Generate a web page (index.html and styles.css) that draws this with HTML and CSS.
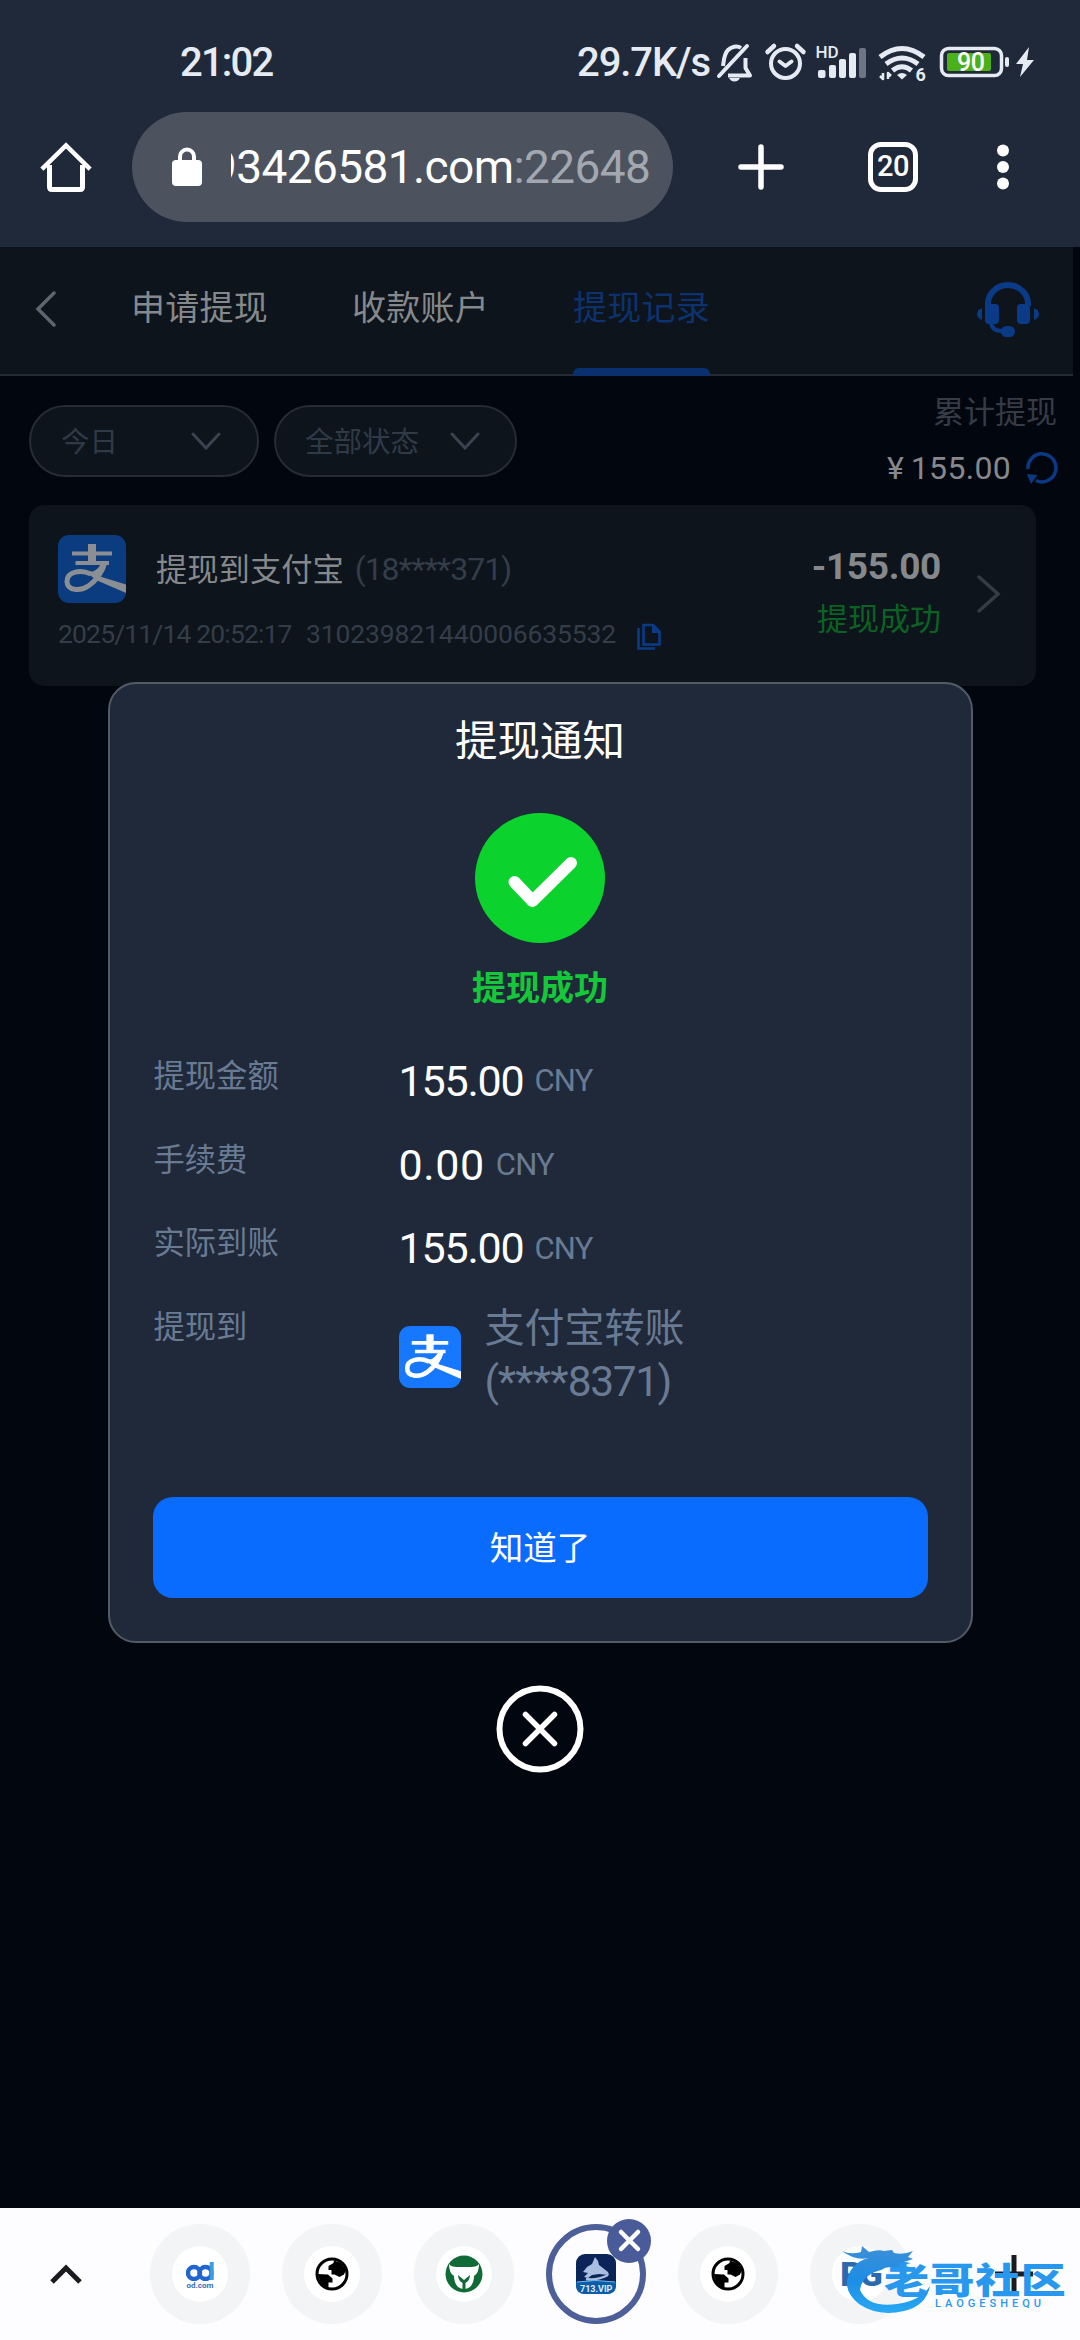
FILE: index.html
```html
<!DOCTYPE html>
<html lang="zh-CN">
<head>
<meta charset="utf-8">
<title>提现记录</title>
<link rel="stylesheet" href="styles.css">
</head>
<body>
<svg width="0" height="0" class="defs" aria-hidden="true">
  <symbol id="alipay" viewBox="0 0 68 68">
    <g fill="none" stroke="currentColor">
      <path d="M34 9V27" stroke-width="8"/>
      <path d="M14 18.500H54" stroke-width="4"/>
      <path d="M17.500 28H51" stroke-width="4"/>
      <path d="M47 27C45 36 38 46 31 50.500C22 57 9 55.500 9 46.500C9 36 23 34.500 33 39" stroke-width="5"/>
    </g>
    <path d="M49.500 26.500C47.500 33 45 38 42 41.500L68 49.500V58L38 45L27 36C34 38 39 37 44 26.500Z" fill="currentColor"/>
  </symbol>
  <symbol id="globe" viewBox="0 0 34 34">
    <circle cx="17" cy="17" r="15" fill="#fff" stroke="#000" stroke-width="3"/>
    <path d="M19 3.500L18.500 6L13.500 9V13H16.500V17.500H19.500L24.500 20L29 17.500L31 13L26 6Z" fill="#000"/>
    <path d="M2.500 17L13 17.500L17.500 21.500V25.500H13.500V31L6 27Z" fill="#000"/>
  </symbol>
  <symbol id="down" viewBox="0 0 30 18">
    <path d="M2 2L15 16L28 2" fill="none" stroke="currentColor" stroke-width="3" stroke-linecap="round"/>
  </symbol>
</svg>
<div class="phone">
  <header class="chrome">
    <div class="status">
      <span class="clock">21:02</span>
      <span class="speed">29.7K/s</span>
      <svg class="sysicons" viewBox="712 38 326 48" width="326" height="48">
        <g fill="none" stroke="#e6ebf3" stroke-width="4" stroke-linejoin="round">
          <path d="M719 76L747 46" stroke-linecap="round"/>
          <path d="M723 66C724 60 724 54 728 50C731 47 737 45 741 48"/>
          <path d="M728 75.500H750L745.500 68V58"/>
          <circle cx="785.500" cy="63.500" r="14.500"/>
          <path d="M779.500 61.500L785.500 66L791.500 61.500" stroke-linecap="round"/>
          <path d="M767.500 52L774 46M803.500 52L797 46" stroke-width="4.500" stroke-linecap="round"/>
          <path d="M880 57Q902 40 924 57" stroke-width="5"/>
          <path d="M886 64Q902 52 918 64" stroke-width="5"/>
          <path d="M892.500 70.500Q902 63 911.500 70.500" stroke-width="5"/>
          <path d="M883 73V79L880 76M888 79V73L891 76" stroke-width="2.500"/>
          <rect x="941.500" y="48.500" width="60" height="27" rx="7" stroke-width="3.500"/>
        </g>
        <g fill="#e6ebf3">
          <path d="M729 78H740Q738 81.500 734.500 81.500Q731 81.500 729 78Z"/>
          <path d="M897 75Q902 71 907 75L902 79.500Z"/>
          <rect x="818" y="70" width="7.500" height="8" rx="2"/>
          <rect x="829" y="65" width="7" height="13" rx="2"/>
          <rect x="839" y="59" width="7" height="19" rx="2"/>
          <rect x="849" y="53" width="7" height="25" rx="2"/>
          <rect x="859" y="48" width="7" height="30" rx="2" opacity=".4"/>
          <rect x="1005" y="57" width="4" height="10" rx="2"/>
          <path d="M1029 47L1016 64H1023L1020 77L1034 60H1027Z"/>
        </g>
        <rect x="947" y="53" width="44" height="18" rx="2" fill="#4cb018"/>
        <text x="815.500" y="58" class="t-hd">HD</text>
        <text x="915.500" y="80.500" class="t-six">6</text>
        <text x="957" y="71" class="t-bat">90</text>
      </svg>
    </div>
    <div class="toolbar">
      <svg class="home" viewBox="0 0 52 52" width="52" height="52" fill="none" stroke="#fff" stroke-width="5" stroke-linejoin="round"><path d="M3.500 26.500L26 4.500L48.500 26.500" stroke-linecap="square" stroke-linejoin="miter" stroke-width="4.500"/><path d="M9.500 24V46Q9.500 48.500 12 48.500H40Q42.500 48.500 42.500 46V24"/></svg>
      <div class="url">
        <svg viewBox="0 0 30 40" width="30" height="40"><rect y="13" width="30" height="26" rx="4" fill="#fff"/><path d="M8 14V9.500A7 7 0 0 1 22 9.500V14" fill="none" stroke="#fff" stroke-width="4"/></svg>
        <div class="url-clip"><span class="url-text">93426581.com<span class="port">:22648</span></span></div>
      </div>
      <svg class="newtab" viewBox="0 0 46 46" width="46" height="46"><path d="M23 3V43M3 23H43" stroke="#fff" stroke-width="5.500" stroke-linecap="round"/></svg>
      <div class="tabcount">20</div>
      <svg class="dots" viewBox="0 0 12 46" width="12" height="46" fill="#fff"><circle cx="6" cy="6.500" r="6"/><circle cx="6" cy="23" r="6"/><circle cx="6" cy="39.500" r="6"/></svg>
    </div>
  </header>

  <main class="page">
    <nav class="nav">
      <svg class="back" viewBox="0 0 22 36" width="22" height="36"><path d="M19 2L3 18L19 34" fill="none" stroke="#5d6570" stroke-width="3.500" stroke-linecap="round"/></svg>
      <span class="tab">申请提现</span>
      <span class="tab">收款账户</span>
      <span class="tab active">提现记录</span>
      <svg class="service" viewBox="0 0 62 56" width="62" height="56" fill="#0b3b87"><path d="M11 24V22A20 19 0 0 1 51 22V24" fill="none" stroke="#0b3b87" stroke-width="6"/><rect x="8" y="22" width="14" height="20" rx="4"/><rect x="40" y="22" width="13" height="20" rx="4"/><path d="M5 26V38Q0 36 0 32T5 26ZM57 26V38Q62 36 62 32T57 26Z"/><path d="M14 41Q15 49 25 49" fill="none" stroke="#0b3b87" stroke-width="4"/><rect x="24" y="44" width="14" height="11" rx="5.500"/></svg>
    </nav>
    <section class="filters">
      <div class="select day"><span>今日</span><svg width="30" height="18"><use href="#down"/></svg></div>
      <div class="select state"><span>全部状态</span><svg width="30" height="18"><use href="#down"/></svg></div>
      <div class="total">
        <div class="total-label">累计提现</div>
        <div class="total-sum"><span class="yen">¥</span><span class="sum">155.00</span>
          <svg viewBox="0 0 34 34" width="34" height="34"><path d="M3 18A14 14 0 1 1 11 29.500" fill="none" stroke="#0b3a85" stroke-width="3.500"/><path d="M2 23L12.500 24L6 33Z" fill="#0b3a85"/></svg>
        </div>
      </div>
    </section>
    <article class="record">
      <div class="record-main">
        <div class="record-title">
          <svg class="pay dim" width="68" height="68"><use href="#alipay"/></svg>
          <span class="name">提现到支付宝</span><span class="acct">(18<span class="stars">****</span>371)</span>
        </div>
        <div class="record-meta">
          <span class="when">2025/11/14 20:52:17</span><span class="order">310239821440006635532</span>
          <svg viewBox="0 0 25 28" width="25" height="28" fill="none" stroke="#0b3b87" stroke-width="2.600"><path d="M6.500 3H16L22.500 9.500V22.500H6.500Z"/><path d="M1.500 6V26.500H18"/><path d="M15 2V11H24Z" fill="#0b3b87" stroke="none"/></svg>
        </div>
      </div>
      <div class="record-side">
        <span class="amount">-155.00</span>
        <span class="ok">提现成功</span>
      </div>
      <svg class="go" viewBox="0 0 24 38" width="24" height="38"><path d="M2 2L21 19L2 36" fill="none" stroke="#353c46" stroke-width="3.500" stroke-linecap="round"/></svg>
    </article>

    <div class="overlay">
      <section class="modal">
        <h1>提现通知</h1>
        <svg class="check" viewBox="0 0 130 130" width="130" height="130"><circle cx="65" cy="65" r="65" fill="#0cd22e"/><path d="M39.500 69L57.500 88L96 50" fill="none" stroke="#fff" stroke-width="12" stroke-linecap="round" stroke-linejoin="round"/></svg>
        <p class="result">提现成功</p>
        <dl class="detail">
          <dt>提现金额</dt><dd><b>155.00</b><i>CNY</i></dd>
          <dt>手续费</dt><dd><b class="zero">0.00</b><i>CNY</i></dd>
          <dt>实际到账</dt><dd><b>155.00</b><i>CNY</i></dd>
          <dt>提现到</dt>
          <dd class="dest"><svg class="pay" width="62" height="62"><use href="#alipay"/></svg><span>支付宝转账<br><span class="num">(<span class="stars">****</span>8371)</span></span></dd>
        </dl>
        <button class="confirm">知道了</button>
      </section>
      <svg class="close" viewBox="0 0 88 88" width="88" height="88" fill="none" stroke="#fff"><circle cx="44" cy="44" r="40.500" stroke-width="6"/><path d="M29.500 29.500L58.500 58.500M58.500 29.500L29.500 58.500" stroke-width="5.500" stroke-linecap="round"/></svg>
    </div>
  </main>

  <footer class="strip">
    <svg class="up" viewBox="0 0 34 22" width="34" height="22"><path d="M3 19L17 5L31 19" fill="none" stroke="#1b1b1f" stroke-width="5"/></svg>
    <div class="sites">
      <div class="site"><div class="disc od"><svg viewBox="0 0 28 20" width="28" height="20" fill="none" stroke="#2166d0" stroke-width="4.500"><circle cx="8" cy="12" r="6"/><circle cx="19.500" cy="12" r="6"/><path d="M25.700 1V19" stroke="#3d9be0" stroke-width="4"/></svg><span>od.com</span></div></div>
      <div class="site"><div class="disc"><svg width="34" height="34"><use href="#globe"/></svg></div></div>
      <div class="site"><div class="disc"><svg viewBox="0 0 38 38" width="38" height="38"><circle cx="19" cy="19" r="18.500" fill="#106b37"/><path d="M4 9Q6 12 12 12H26Q32 12 34 9Q34 18 29 21Q29 28 25 32Q19 36 13 32Q9 28 9 21Q4 18 4 9Z" fill="#fff"/><path d="M13 20L19 25L25 20Q25 25 20.500 28V35H17.500V28Q13 25 13 20Z" fill="#106b37"/></svg></div></div>
      <div class="site current">
        <svg viewBox="0 0 40 40" width="40" height="40"><rect width="40" height="40" rx="9" fill="#0c2558"/><path d="M0 28Q20 25 40 28V31Q40 40 31 40H9Q0 40 0 31Z" fill="#0d5ca8"/><path d="M7 18L11 13L16 10L19 3L22 7L23 11L32 18L33 21L23 20L16 21L12 24L8 23L12 19Z" fill="#a9bee0"/><path d="M10 25Q20 27 32 21" fill="none" stroke="#a9bee0" stroke-width="2.500"/><path d="M1 28Q20 25 39 28" fill="none" stroke="#6cb6ef" stroke-width="1"/><text x="4" y="38" class="t-vip">713.VIP</text></svg>
        <svg class="badge" viewBox="0 0 44 44" width="44" height="44"><circle cx="22" cy="22" r="22" fill="#495b99"/><path d="M14 13L31 30M31 13L14 30" stroke="#fff" stroke-width="4.500" stroke-linecap="round"/></svg>
      </div>
      <div class="site"><div class="disc"><svg width="34" height="34"><use href="#globe"/></svg></div></div>
      <div class="site"><div class="disc pg">PG</div></div>
    </div>
    <svg class="add" viewBox="0 0 38 38" width="38" height="38"><path d="M19 0V38M0 19H38" stroke="#1b1b1f" stroke-width="5"/></svg>
    <div class="brand">
      <svg viewBox="0 0 92 70" width="92" height="70"><defs><linearGradient id="dragon" x1="0" y1="0" x2="0" y2="1"><stop offset="0" stop-color="#3d8fd6"/><stop offset=".5" stop-color="#1d8de6"/><stop offset="1" stop-color="#27a8f2"/></linearGradient></defs><path d="M0 6Q9 10 19 7L20 1L27 7Q37 4 42 6L50 5L52 8Q62 10 71 6L66 12L71 14L62 17L69 18L61 20L69 23L54 23Q46 20 39 25Q20 30 18 45Q26 63 55 59Q78 56 88 41Q84 61 62 66Q36 72 17 59Q-2 44 9 25Q16 15 27 13Q13 16 0 6Z" fill="url(#dragon)"/></svg>
      <div class="brand-text"><strong>老哥社区</strong><small>LAOGESHEQU</small></div>
    </div>
  </footer>
</div>
</body>
</html>
```
FILE: styles.css
```css
* { box-sizing: border-box; }
body {
  margin: 0;
  background: #02060f;
  font-family: Roboto, "Noto Sans CJK SC", sans-serif;
  color: #fff;
}
.defs { position: absolute; }
svg { display: block; flex: none; }
span, b, i, strong, small { white-space: nowrap; }
h1, p, dl, dd { margin: 0; }

.phone {
  width: 1080px;
  height: 2340px;
  display: flex;
  flex-direction: column;
  overflow: hidden;
}

/* browser chrome */
.chrome { height: 247px; background: #1f2939; flex: none; }
.status {
  height: 112px;
  padding: 38px 0 0 180px;
  display: flex;
  color: #e6ebf3;
  font-size: 40px;
  font-weight: 500;
  line-height: 50px;
}
.clock { width: 397px; letter-spacing: -1.8px; }
.speed { width: 135px; letter-spacing: -1.1px; }
.t-hd { font-size: 17px; font-weight: 500; fill: #e6ebf3; }
.t-six { font-size: 18px; font-weight: 700; fill: #e6ebf3; }
.t-bat { font-size: 25px; font-weight: 500; fill: #fff; letter-spacing: -.5px; }

.toolbar { height: 110px; display: flex; align-items: center; padding-left: 40px; }
.url {
  width: 541px;
  height: 110px;
  margin-left: 40px;
  padding-left: 40px;
  border-radius: 55px;
  background: #4c535f;
  display: flex;
  align-items: center;
}
.url-clip { width: 430px; margin-left: 29px; overflow: hidden; display: flex; }
.url-text { margin-left: -20px; font-size: 46px; line-height: 60px; letter-spacing: -.6px; }
.port { color: #a3a8b0; }
.newtab { margin-left: 65px; }
.tabcount {
  width: 50px;
  height: 50px;
  margin-left: 84px;
  border: 5.5px solid #fff;
  border-radius: 13px;
  font-size: 29px;
  font-weight: 500;
  line-height: 39px;
  text-align: center;
  letter-spacing: -.5px;
}
.dots { margin-left: 79px; }

/* page behind the dialog */
.page { flex: 1; position: relative; background: #02060f; }
.nav {
  width: 1073px;
  height: 129px;
  background: #0e141b;
  border-bottom: 2px solid #252c35;
  display: flex;
  align-items: flex-start;
  padding-left: 35px;
  color: #86898c;
  font-size: 34px;
  line-height: 123px;
}
.back { margin-top: 44px; }
.tab { width: 137px; height: 129px; letter-spacing: .2px; text-align: center; margin-left: 84px; }
.tab:nth-of-type(1) { margin-left: 74px; }
.tab.active {
  position: relative;
  color: #0d3270;
}
.tab.active::after {
  content: "";
  position: absolute;
  left: 0;
  bottom: 0;
  width: 137px;
  height: 8px;
  border-radius: 6px 6px 0 0;
  background: #0b3070;
}
.service { margin: 35px 0 0 267px; }

.filters { height: 129px; padding: 29px 0 0 29px; display: flex; }
.select {
  height: 72px;
  border: 2px solid #252c35;
  border-radius: 36px;
  background: #0e141b;
  color: #303a47;
  display: flex;
  align-items: center;
  justify-content: space-between;
  font-size: 28.5px;
}
.select span { padding-bottom: 4px; }
.select svg { color: #3a434f; }
.day { width: 230px; padding: 0 36px 0 30px; }
.state { width: 243px; margin-left: 15px; padding: 0 35px 0 29px; }
.total {
  flex: 1;
  padding-right: 21px;
  margin-top: -14px;
  display: flex;
  flex-direction: column;
  align-items: flex-end;
}
.total-label { color: #353c46; font-size: 31px; line-height: 44px; padding-right: 2px; }
.total-sum { display: flex; align-items: center; height: 66px; font-size: 32px; color: #86898c; }
.yen { margin-right: 7px; }
.sum { margin-right: 14px; letter-spacing: .3px; }

.record {
  width: 1007px;
  height: 181px;
  margin-left: 29px;
  padding: 30px 0 0 29px;
  border-radius: 15px;
  background: #0e141b;
  display: flex;
}
.record-main { width: 640px; flex: none; }
.record-title { display: flex; height: 68px; align-items: center; font-size: 31.3px; color: #86898c; }
.pay { border-radius: 11px; background: #1677ff; color: #fff; }
.pay.dim { background: #0b3c80; color: #8b8e92; }
.name { margin-left: 30px; padding-bottom: 4px; }
.acct { margin-left: 11px; padding-bottom: 1px; font-size: 32px; color: #343d49; letter-spacing: -1.1px; }
.stars { letter-spacing: -.8px; }
.record-meta { display: flex; align-items: center; height: 28px; margin-top: 19px; font-size: 26.5px; line-height: 26px; color: #343d49; }
.record-meta span { flex: none; padding-bottom: 4px; }
.when { width: 248px; letter-spacing: -.85px; }
.order { width: 331px; letter-spacing: -.13px; }
.record-side { width: 243px; display: flex; flex-direction: column; align-items: flex-end; }
.amount { margin-top: 8px; font-size: 37px; line-height: 48px; font-weight: 700; color: #86898c; letter-spacing: -.3px; }
.ok { font-size: 31px; line-height: 48px; margin-top: 5px; color: #0a6323; }
.go { margin: 40px 0 0 36px; }

/* dialog */
.overlay {
  position: absolute;
  inset: 0;
  padding-top: 435px;
  display: flex;
  flex-direction: column;
  align-items: center;
}
.modal {
  width: 865px;
  height: 961px;
  padding: 31px 43px 0;
  border: 2px solid #535b67;
  border-radius: 28px;
  background: #1f2939;
  display: flex;
  flex-direction: column;
  align-items: center;
}
h1 { font-size: 42.5px; line-height: 54px; font-weight: 400; }
.check { margin-top: 44px; }
.result { margin-top: 18px; color: #14c83a; font-size: 34px; line-height: 54px; font-weight: 600; }
.detail {
  width: 100%;
  margin-top: 20px;
  display: grid;
  grid-template-columns: 246px 1fr;
  grid-auto-rows: 83.7px;
  height: 462px;
}
dt { font-size: 31.3px; line-height: 84px; color: #697a93; padding-left: 1px; }
dd { display: flex; align-items: center; padding-top: 8px; }
dd b { font-size: 43px; line-height: 74px; font-weight: 400; letter-spacing: -1.2px; }
dd .zero { letter-spacing: .6px; }
dd i { font-size: 31px; font-style: normal; color: #697a93; margin-left: 11px; letter-spacing: -.8px; }
.dest { align-items: flex-start; padding-top: 16px; font-size: 40px; line-height: 53px; color: #697a93; height: 140px; }
.dest .pay { margin-top: 24px; margin-right: 24px; }
.num { font-size: 42.5px; letter-spacing: -1.4px; }
.confirm {
  width: 775px;
  height: 101px;
  border: 0;
  border-radius: 20px;
  background: #0a6cff;
  color: #fff;
  font: 400 33.5px/101px Roboto, "Noto Sans CJK SC", sans-serif;
}
.close { margin-top: 42px; }

/* tab strip */
.strip {
  position: relative;
  height: 132px;
  flex: none;
  background: #fdfcff;
  display: flex;
  align-items: center;
  padding-left: 49px;
}
.sites { display: flex; gap: 32px; margin-left: 67px; }
.site {
  width: 100px;
  height: 100px;
  border-radius: 50%;
  background: #f2f4f5;
  display: flex;
  align-items: center;
  justify-content: center;
}
.disc {
  width: 56px;
  height: 56px;
  border-radius: 50%;
  background: #fff;
  display: flex;
  align-items: center;
  justify-content: center;
}
.od { flex-direction: column; color: #3a6cb8; font-size: 8px; line-height: 9px; font-weight: 700; padding-top: 3px; }
.pg { color: #2a6aae; font-size: 34px; font-weight: 900; letter-spacing: -3px; }
.current { position: relative; background: #fdfcff; border: 6px solid #4c5f99; }
.badge { position: absolute; left: 55px; top: -11px; }
.t-vip { font-size: 9px; font-weight: 700; fill: #dcecff; }
.add { margin-left: 85px; }
.brand { position: absolute; left: 842px; top: 37px; display: flex; }
.brand-text {
  margin: 16px 0 0 -50px;
  display: flex;
  flex-direction: column;
  color: #2897ee;
}
.brand-text strong {
  font-size: 45px;
  line-height: 41px;
  font-weight: 900;
  letter-spacing: .6px;
  transform: scaleY(.8);
}
.brand-text small { font-size: 11px; line-height: 10px; letter-spacing: 4px; margin-left: 51px; margin-top: -3px; font-weight: 500; }
```
